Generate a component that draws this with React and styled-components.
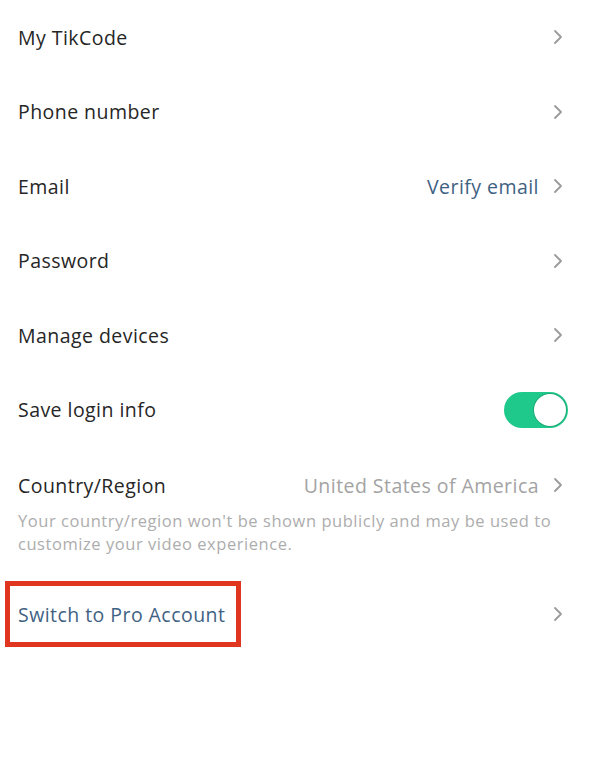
import React, { useState } from 'react';
import styled, { createGlobalStyle } from 'styled-components';

const GlobalStyle = createGlobalStyle`
  body {
    margin: 0;
    background: #ffffff;
    font-family: "Open Sans", Lato, sans-serif;
  }
`;

const Page = styled.div`
  width: 589px;
  height: 758px;
  background: #fff;
  display: flex;
  flex-direction: column;
`;

const Row = styled.div`
  height: 74.5px;
  display: flex;
  align-items: center;
  padding: 0 26px 0 18px;
  box-sizing: border-box;
`;

const Label = styled.span`
  flex: 1;
  font-size: 19.5px;
  letter-spacing: 0.45px;
  color: #262626;
`;

const Value = styled.span`
  font-size: 19.5px;
  letter-spacing: 0.45px;
  color: ${p => (p.$blue ? '#3f6283' : '#a3a3a3')};
  margin-right: 14px;
`;

const Chevron = styled.svg`
  width: 10px;
  height: 16px;
  flex-shrink: 0;
`;

const Toggle = styled.button`
  width: 64px;
  height: 36px;
  border-radius: 18px;
  border: none;
  padding: 0;
  margin-right: -5px;
  background: ${p => (p.$on ? '#1fc98c' : '#ddd')};
  position: relative;
  cursor: pointer;
`;

const Knob = styled.span`
  position: absolute;
  top: 2px;
  left: ${p => (p.$on ? '30px' : '2px')};
  width: 32px;
  height: 32px;
  border-radius: 50%;
  background: #fff;
  box-shadow: 0 0 0 1px rgba(0, 0, 0, 0.15);
`;

const CountryBlock = styled.div`
  display: flex;
  flex-direction: column;
  padding: 0 26px 0 18px;
`;

const CountryRow = styled.div`
  display: flex;
  align-items: center;
  height: 48px;
  margin-top: 14px;
`;

const Hint = styled.p`
  margin: 0;
  font-size: 16.5px;
  letter-spacing: 0.55px;
  line-height: 23px;
  color: #adadad;
`;

const ProRow = styled(Row)`
  margin-top: 22px;
`;

const Highlight = styled.div`
  flex: 1;
  display: flex;
  align-items: center;
`;

const ProBox = styled.span`
  border: 5px solid #e0351f;
  margin-left: -13px;
  padding: 0 11px 0 8px;
  height: 56px;
  display: flex;
  align-items: center;
  font-size: 19.5px;
  letter-spacing: 0.45px;
  color: #3f6283;
`;

const Arrow = () => (
  <Chevron viewBox="0 0 10 16">
    <path d="M2 2l6 6-6 6" fill="none" stroke="#9a9a9a" strokeWidth="1.8" strokeLinecap="round" strokeLinejoin="round" />
  </Chevron>
);

export default function App() {
  const [saveLogin, setSaveLogin] = useState(true);

  return (
    <Page>
      <GlobalStyle />
      <Row>
        <Label>My TikCode</Label>
        <Arrow />
      </Row>
      <Row>
        <Label>Phone number</Label>
        <Arrow />
      </Row>
      <Row>
        <Label>Email</Label>
        <Value $blue>Verify email</Value>
        <Arrow />
      </Row>
      <Row>
        <Label>Password</Label>
        <Arrow />
      </Row>
      <Row>
        <Label>Manage devices</Label>
        <Arrow />
      </Row>
      <Row>
        <Label>Save login info</Label>
        <Toggle $on={saveLogin} onClick={() => setSaveLogin(!saveLogin)}>
          <Knob $on={saveLogin} />
        </Toggle>
      </Row>
      <CountryBlock>
        <CountryRow>
          <Label>Country/Region</Label>
          <Value>United States of America</Value>
          <Arrow />
        </CountryRow>
        <Hint>Your country/region won't be shown publicly and may be used to customize your video experience.</Hint>
      </CountryBlock>
      <ProRow>
        <Highlight>
          <ProBox>Switch to Pro Account</ProBox>
        </Highlight>
        <Arrow />
      </ProRow>
    </Page>
  );
}
